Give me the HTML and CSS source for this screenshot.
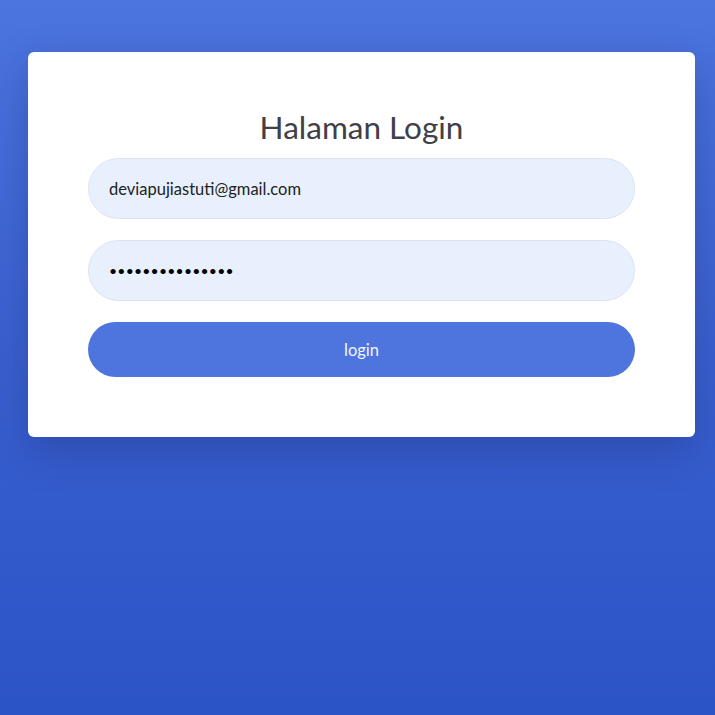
FILE: index.html
```html
<!DOCTYPE html>
<html lang="id">
<head>
<meta charset="utf-8">
<title>Halaman Login</title>
<link rel="stylesheet" href="styles.css">
</head>
<body>
<div class="card">
  <h1 class="title">Halaman Login</h1>
  <form class="form">
    <div class="field">deviapujiastuti@gmail.com</div>
    <div class="field pass">•••••••••••••••</div>
    <button type="button" class="btn">login</button>
  </form>
</div>
</body>
</html>
```
FILE: styles.css
```css
html, body {
  margin: 0;
  padding: 0;
  height: 100%;
}
body {
  background: linear-gradient(180deg, #4c75de 0%, #3a60cf 50%, #2b54c7 100%);
  font-family: Lato, "Open Sans", "Noto Sans", sans-serif;
  padding-top: 52px;
  box-sizing: border-box;
}
.card {
  margin-left: 28px;
  width: 667px;
  height: 385px;
  box-sizing: border-box;
  background: #fff;
  border-radius: 6px;
  padding: 56px 60px 60px;
  box-shadow: 0 14px 40px rgba(20, 30, 90, 0.28);
}
.title {
  margin: 0 0 12px;
  text-align: center;
  font-weight: 400;
  font-size: 31.5px;
  line-height: 38px;
  color: #404048;
}
.form {
  display: flex;
  flex-direction: column;
  gap: 21px;
}
.field {
  height: 61px;
  box-sizing: border-box;
  border: 1px solid #dde2ee;
  border-radius: 31px;
  background: #e8f0fe;
  padding: 0 20px;
  display: flex;
  align-items: center;
  font-size: 16.5px;
  color: #222;
}
.pass {
  font-size: 14px;
  letter-spacing: 0.2px;
  color: #000;
}
.btn {
  height: 55px;
  border: none;
  border-radius: 28px;
  background: #4e75de;
  color: #f2f4ff;
  font-family: inherit;
  font-size: 16.5px;
  cursor: pointer;
}
```
